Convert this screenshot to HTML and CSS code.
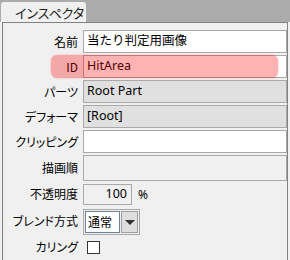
FILE: index.html
```
<!DOCTYPE html>
<html>
<head>
    <title>インスペクタ</title>
    <link rel="stylesheet" href="styles.css">
</head>
<body>
    <div class="tabbar">
        <div class="tab">インスペクタ</div>
    </div>
    <div class="panel">
        <div class="props">
            <label class="prop-label">名前</label>
            <div class="field">当たり判定用画像</div>

            <label class="prop-label">ID</label>
            <div class="field">HitArea</div>

            <label class="prop-label">パーツ</label>
            <div class="field disabled">Root Part</div>

            <label class="prop-label">デフォーマ</label>
            <div class="field disabled">[Root]</div>

            <label class="prop-label">クリッピング</label>
            <div class="field"></div>

            <label class="prop-label">描画順</label>
            <div class="field flat tall"></div>

            <label class="prop-label">不透明度</label>
            <div class="opacity-row">
                <div class="field number">100</div>
                <span class="unit">%</span>
            </div>

            <label class="prop-label">ブレンド方式</label>
            <div class="select">
                <span class="select-value">通常</span>
                <span class="select-button"><span class="arrow"></span></span>
            </div>

            <label class="prop-label">カリング</label>
            <div class="check-cell"><span class="checkbox"></span></div>
        </div>
        <!-- highlight over the ID row -->
        <div class="highlight"></div>
    </div>
</body>
</html>
```

FILE: styles.css
```
body {
    margin: 0;
    background-color: #f0f0f0;
    font-family: "Noto Sans", "Noto Sans CJK JP", sans-serif;
    font-size: 12px;
    color: #000;
    height: 260px;
    overflow: hidden;
}
.tabbar {
    height: 22px;
    background-color: #ababab;
    padding: 2px 0 0 1px;
    box-sizing: border-box;
}
.tab {
    width: 85px;
    height: 20px;
    background-color: #f0f0f0;
    border-radius: 3px 3px 0 0;
    padding-left: 14px;
    box-sizing: border-box;
    line-height: 21px;
    font-family: "Noto Sans CJK JP", sans-serif;
    font-feature-settings: "palt";
    font-size: 13px;
    color: #222;
}
.panel {
    position: relative;
    margin-left: 2px;
    width: 286px;
    height: 238px;
    box-sizing: border-box;
    border: 1px solid #828282;
    border-bottom: none;
    padding-top: 7px;
}
.props {
    display: grid;
    grid-template-columns: 80px 1fr;
    row-gap: 2px;
    align-items: center;
}
.prop-label {
    text-align: right;
    padding-right: 5px;
    font-family: "Noto Sans CJK JP", sans-serif;
    font-feature-settings: "palt";
    font-size: 12px;
    line-height: 16px;
}
.field {
    height: 23px;
    box-sizing: border-box;
    border: 1px solid #a9a9a9;
    background-color: #fff;
    padding-left: 3px;
    line-height: 20px;
    font-size: 12.5px;
    white-space: nowrap;
    overflow: hidden;
}
.field.disabled {
    background-color: #e0e0e0;
}
.field.flat {
    background-color: #f0f0f0;
}
.field.tall {
    height: 26px;
}
.opacity-row {
    display: flex;
    align-items: center;
    margin-top: 1px;
}
.field.number {
    width: 49px;
    height: 21px;
    line-height: 18px;
    text-align: right;
    padding-right: 4px;
    background-color: #f0f0f0;
}
.unit {
    margin-left: 6px;
    font-size: 12px;
}
.select {
    width: 57px;
    height: 26px;
    box-sizing: border-box;
    border: 1px solid #a8a8a8;
    padding: 1px;
    display: flex;
    margin-top: 2px;
}
.select-value {
    width: 36px;
    box-sizing: border-box;
    border: 1px solid #6f7f95;
    background-color: #fff;
    padding-left: 2px;
    line-height: 20px;
    font-family: "Noto Sans CJK JP", sans-serif;
    font-size: 12px;
}
.select-button {
    width: 17px;
    margin-left: 1px;
    box-sizing: border-box;
    border: 1px solid #a0a0a0;
    background-color: #dedede;
    display: flex;
    align-items: center;
    justify-content: center;
}
.arrow {
    width: 0;
    height: 0;
    border-left: 5px solid transparent;
    border-right: 5px solid transparent;
    border-top: 5px solid #333;
}
.check-cell {
    height: 20px;
    display: flex;
    align-items: center;
    padding-left: 4px;
}
.checkbox {
    width: 13px;
    height: 13px;
    box-sizing: border-box;
    border: 1px solid #333;
    background-color: #fff;
}
.highlight {
    position: absolute;
    left: 48px;
    top: 32px;
    width: 227px;
    height: 23px;
    border-radius: 6px;
    background-color: rgba(255, 0, 0, 0.3);
    box-shadow: 0 0 2px rgba(255, 0, 0, 0.3);
}
```
